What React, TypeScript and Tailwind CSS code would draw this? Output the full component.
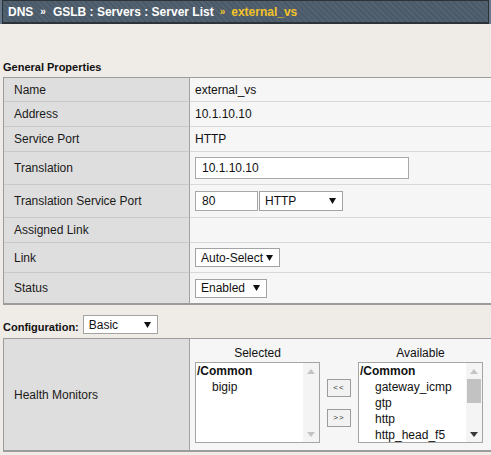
const font = "font-['Liberation_Sans',Arial,Helvetica,sans-serif]";

function Arrow({ color = "#111" }: { color?: string }) {
  return (
    <svg width="7" height="6" viewBox="0 0 7 6">
      <path d="M0 0h7L3.5 6z" fill={color} />
    </svg>
  );
}

function Select({ label, width, height = 19 }: { label: string; width: number; height?: number }) {
  return (
    <div
      className="flex items-center justify-between border border-[#a3a3a3] bg-white pl-[5px] pr-[6px] text-[12px] leading-none text-[#111]"
      style={{ width, height }}
    >
      <span>{label}</span>
      <Arrow />
    </div>
  );
}

const rows = [
  { label: "Name", h: "h-[24px]", value: <span>external_vs</span> },
  { label: "Address", h: "h-[25px]", value: <span>10.1.10.10</span> },
  { label: "Service Port", h: "h-[25px]", value: <span>HTTP</span> },
  {
    label: "Translation",
    h: "h-[33px]",
    value: (
      <div className="flex h-[22px] w-[214px] items-center border border-[#a8a8a8] bg-white pl-[6px]">10.1.10.10</div>
    ),
  },
  {
    label: "Translation Service Port",
    h: "h-[33px]",
    value: (
      <div className="flex items-center gap-[1px]">
        <div className="flex h-[20px] w-[63px] items-center border border-[#a8a8a8] bg-white pl-[6px]">80</div>
        <Select label="HTTP" width={84} height={20} />
      </div>
    ),
  },
  { label: "Assigned Link", h: "h-[25px]", value: null },
  { label: "Link", h: "h-[30px]", value: <Select label="Auto-Select" width={85} /> },
  { label: "Status", h: "h-[30px]", value: <Select label="Enabled" width={72} /> },
];

function ListBox({ items, thumb }: { items: string[]; thumb?: boolean }) {
  return (
    <div className="flex h-[81px] w-[125px] border border-[#a5a5a5] bg-white">
      <div className="flex-1 pl-[1px] text-[12px] leading-[16px] text-[#111]">
        <div className="font-bold">/Common</div>
        {items.map((it) => (
          <div key={it} className="pl-[15px]">
            {it}
          </div>
        ))}
      </div>
      <div className="flex w-[16px] flex-col bg-[#f4f4f4]">
        <div className="flex h-[16px] items-center justify-center">
          <svg width="8" height="5" viewBox="0 0 8 5">
            <path d="M0 5h8L4 0z" fill="#c4c4c4" />
          </svg>
        </div>
        {thumb ? <div className="mx-[1px] h-[24px] bg-[#c2c2c2]" /> : null}
        <div className="flex-1" />
        <div className="flex h-[16px] items-center justify-center">
          <svg width="8" height="5" viewBox="0 0 8 5">
            <path d="M0 0h8L4 5z" fill={thumb ? "#3a3a3a" : "#c4c4c4"} />
          </svg>
        </div>
      </div>
    </div>
  );
}

function MoveButton({ label }: { label: string }) {
  return (
    <div className="flex h-[18px] w-[24px] items-center justify-center border border-[#9c9c9c] bg-[#f2f2f2] text-[8px] leading-none tracking-[1px] text-[#333]">
      {label}
    </div>
  );
}

export default function App() {
  return (
    <div className={`${font} min-h-[455px] w-[491px] overflow-hidden bg-[#efebe7] text-[12px] text-[#111]`}>
      <div className="h-[24px] bg-[#66788a] px-[2px]">
        <div className="flex h-full items-center border border-b-2 border-[#2b3238] bg-[repeating-linear-gradient(45deg,#4b5a68_0px,#4b5a68_2px,#536270_2px,#536270_4px)] pl-[5px] text-[12px] font-bold leading-none text-white">
          <span>DNS</span>
          <span className="mx-[7px] text-[10px]">»</span>
          <span>GSLB : Servers : Server List</span>
          <span className="mx-[6px] text-[10px] text-[#f2c22a]">»</span>
          <span className="text-[#f2c22a]">external_vs</span>
        </div>
      </div>

      <div className="mt-[37px] pl-[3px] text-[11px] font-bold leading-[13px]">General Properties</div>

      <div className="ml-[3px] mt-[3px] border-b-2 border-l border-t border-[#9c9c9c]">
        {rows.map((r, i) => (
          <div key={r.label} className={`flex ${r.h}`}>
            <div
              className={`flex w-[186px] items-center border-r border-[#a2a2a2] bg-[#dedede] pl-[10px] text-[#1a1a1a] ${
                i < rows.length - 1 ? "border-b border-b-[#c9c9c9]" : ""
              }`}
            >
              {r.label}
            </div>
            <div
              className={`flex flex-1 items-center bg-[#f6f6f6] pl-[5px] ${
                i < rows.length - 1 ? "border-b border-[#d9d9d9]" : ""
              }`}
            >
              {r.value}
            </div>
          </div>
        ))}
      </div>

      <div className="mt-[10px] flex items-end pl-[3px]">
        <span className="text-[11px] font-bold leading-[13px]">Configuration:</span>
        <div className="ml-[4px]">
          <Select label="Basic" width={75} />
        </div>
      </div>

      <div className="ml-[3px] mt-[4px] flex h-[114px] border-b-2 border-l border-t border-[#9c9c9c]">
        <div className="flex w-[186px] items-center border-r border-[#a2a2a2] bg-[#dedede] pl-[10px] text-[#1a1a1a]">
          Health Monitors
        </div>
        <div className="flex flex-1 items-start gap-[7px] bg-[#f6f6f6] pl-[5px] pt-[6px]">
          <div className="flex flex-col">
            <div className="mb-[1px] h-[16px] text-center leading-[16px]">Selected</div>
            <ListBox items={["bigip"]} />
          </div>
          <div className="mt-[34px] flex flex-col gap-[12px]">
            <MoveButton label="<<" />
            <MoveButton label=">>" />
          </div>
          <div className="flex flex-col">
            <div className="mb-[1px] h-[16px] text-center leading-[16px]">Available</div>
            <ListBox items={["gateway_icmp", "gtp", "http", "http_head_f5"]} thumb />
          </div>
        </div>
      </div>
    </div>
  );
}
